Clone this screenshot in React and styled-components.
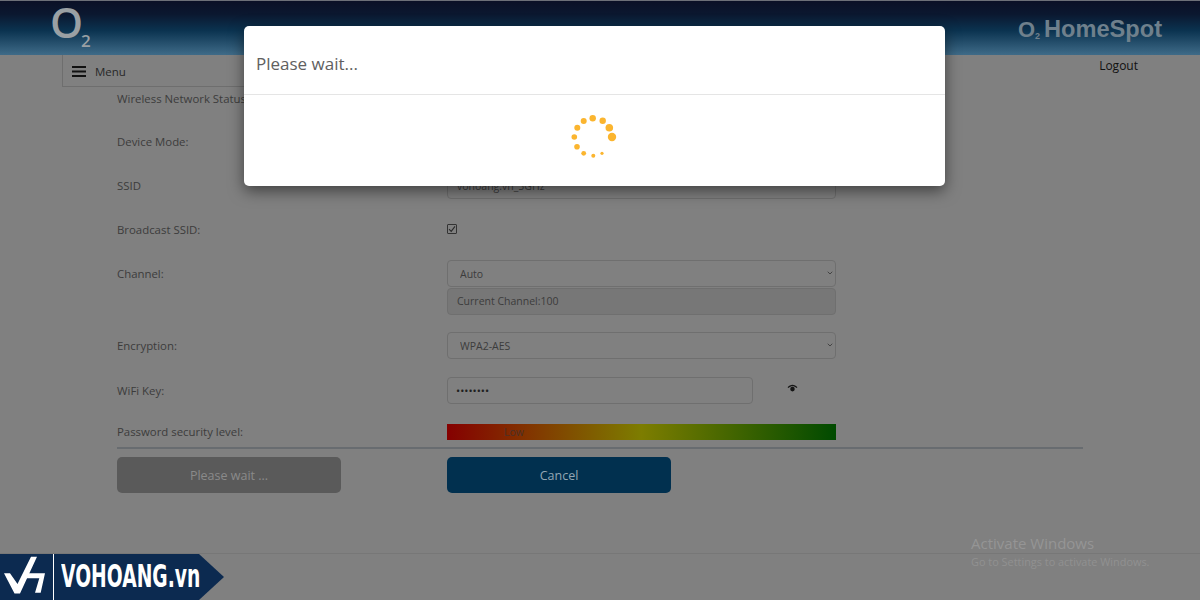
import React from 'react'
import styled, { createGlobalStyle } from 'styled-components'
import { ChevronDown } from 'lucide-react'

const spinnerDots = [
  [592.7, 118.3, 3.2],
  [602.7, 120.7, 3.2],
  [609.3, 127.7, 3.8],
  [612, 137, 4.2],
  [602, 153.3, 1.6],
  [593.3, 155.7, 2],
  [583.7, 153.3, 2.4],
  [577, 146.7, 2.8],
  [574.3, 137, 2.8],
  [577.3, 127.7, 3],
  [583.7, 121, 3],
]

function Dropdown({ value }) {
  return (
    <SelectWrap>
      <Select defaultValue={value}>
        <option>{value}</option>
      </Select>
      <SelectArrow>
        <ChevronDown size={8} strokeWidth={3} />
      </SelectArrow>
    </SelectWrap>
  )
}

function App() {
  return (
    <Page>
      <GlobalStyle />
      <Header>
        <BrandMark>
          O<sub>2</sub>
        </BrandMark>
        <ProductName>
          <small>O</small>
          <sub>2</sub>
          <span>HomeSpot</span>
        </ProductName>
      </Header>
      <NavBar>
        <MenuButton>
          <svg width='14' height='11' viewBox='0 0 14 11'>
            <rect y='0' width='14' height='2' fill='#111' />
            <rect y='4.5' width='14' height='2' fill='#111' />
            <rect y='9' width='14' height='2' fill='#111' />
          </svg>
          Menu
        </MenuButton>
        <LogoutLink>Logout</LogoutLink>
      </NavBar>
      <Form>
        <Row $height={43}>
          <Label>Wireless Network Status</Label>
        </Row>
        <Row $height={44}>
          <Label>Device Mode:</Label>
        </Row>
        <Row $height={44}>
          <Label>SSID</Label>
          <TextInput type='text' defaultValue='vohoang.vn_5GHz' />
        </Row>
        <Row $height={44}>
          <Label>Broadcast SSID:</Label>
          <CheckBox>
            <svg width='8' height='8' viewBox='0 0 8 8'>
              <path d='M1 4.2 3.2 6.4 7 1.4' fill='none' stroke='#2a2a2a' strokeWidth='1.1' />
            </svg>
          </CheckBox>
        </Row>
        <Row $height={72}>
          <Label>Channel:</Label>
          <div>
            <Dropdown value='Auto' />
            <ReadonlyField>Current Channel:100</ReadonlyField>
          </div>
        </Row>
        <Row $height={45}>
          <Label>Encryption:</Label>
          <Dropdown value='WPA2-AES' />
        </Row>
        <Row $height={41}>
          <Label>WiFi Key:</Label>
          <KeyField>
            <PasswordInput type='password' defaultValue='12345678' />
            <svg width='11' height='10' viewBox='0 0 12 10'>
              <path d='M0.6 4.2C3.4 0.4 8.6 0.4 11.4 4.2L10.3 5C8 2.4 4 2.4 1.7 5Z' fill='#151515' />
              <circle cx='6' cy='6.2' r='2.5' fill='#151515' />
            </svg>
          </KeyField>
        </Row>
        <Row $height={29}>
          <Label>Password security level:</Label>
          <StrengthBar>Low</StrengthBar>
        </Row>
        <Divider />
        <Actions>
          <WaitButton type='button'>Please wait ...</WaitButton>
          <CancelButton type='button'>Cancel</CancelButton>
        </Actions>
      </Form>
      <Footer />

      <Modal>
        <ModalHeader>Please wait...</ModalHeader>
        <ModalBody>
          <svg width='50' height='50' viewBox='568 112 50 50'>
            {spinnerDots.map(([x, y, r]) => (
              <circle key={`${x}-${y}`} cx={x} cy={y} r={r} fill='#fbb52f' />
            ))}
          </svg>
        </ModalBody>
      </Modal>

      <Watermark>
        <WatermarkTitle>Activate Windows</WatermarkTitle>
        <WatermarkHint>Go to Settings to activate Windows.</WatermarkHint>
      </Watermark>

      <VendorLogo>
        <VendorMark>
          <svg width='53' height='46' viewBox='0 0 53 46'>
            <path d='M4 19.3H10L17.5 30 31 2.7H37L20 39.5H14.5Z' fill='#fff' />
            <path d='M27.7 19.3H45L40.7 38.7H35L39.3 24.3H25Z' fill='#fff' />
          </svg>
        </VendorMark>
        <VendorName>VOHOANG.vn</VendorName>
      </VendorLogo>
    </Page>
  )
}

export default App

///// Style //////

const GlobalStyle = createGlobalStyle`
  html, body {
    margin: 0;
    background: #808080;
  }
  * {
    box-sizing: border-box;
  }
`

const Page = styled.div`
  position: relative;
  width: 1200px;
  height: 600px;
  overflow: hidden;
  background: #808080;
  font-family: 'Open Sans', 'Noto Sans', sans-serif;
  font-size: 11.4px;
  color: #3c3c3c;
`

const Header = styled.header`
  display: flex;
  align-items: flex-start;
  justify-content: space-between;
  height: 55px;
  padding: 0 38px 0 50px;
  border-top: 1px solid #6d7078;
  background: linear-gradient(180deg, #0b1026 0%, #0b1830 25%, #0b3350 55%, #3f6b88 100%);
`

const BrandMark = styled.div`
  margin-top: 1px;
  font-size: 42px;
  line-height: 40px;
  font-weight: 600;
  color: #9aa0a4;

  sub {
    margin-left: -2px;
    font-size: 17px;
    line-height: 0;
    vertical-align: -9px;
  }
`

const ProductName = styled.div`
  display: flex;
  align-items: baseline;
  margin-top: 13px;
  font-family: 'Liberation Sans', Arial, sans-serif;
  font-size: 23.6px;
  line-height: 30px;
  font-weight: 700;
  color: #6f808c;

  small {
    font-size: 22px;
  }

  sub {
    margin-right: 4px;
    font-size: 9px;
    line-height: 0;
    vertical-align: baseline;
    position: relative;
    top: 2px;
  }
`

const NavBar = styled.nav`
  display: flex;
  justify-content: space-between;
  height: 32px;
  padding: 0 62px;
`

const MenuButton = styled.div`
  display: flex;
  align-items: center;
  gap: 9px;
  width: 200px;
  height: 32px;
  padding: 2px 0 0 9px;
  border-left: 1px solid #6e6e6e;
  border-bottom: 1px solid #6e6e6e;
  color: #282828;
  font-size: 11.5px;
`

const LogoutLink = styled.a`
  margin-top: 2px;
  color: #111;
  font-size: 12px;
  line-height: 18px;
`

const Form = styled.form`
  width: 966px;
  margin: -2px 0 0 117px;
`

const Row = styled.div`
  display: grid;
  grid-template-columns: 330px 389px;
  align-items: start;
  height: ${(props) => props.$height}px;
`

const Label = styled.label`
  line-height: 27px;
  color: #3c3c3c;
  white-space: nowrap;
`

const TextInput = styled.input`
  width: 100%;
  height: 27px;
  padding: 0 9px;
  background: #808080;
  border: 1px solid #6f6f6f;
  border-radius: 4px;
  font: inherit;
  font-size: 10.5px;
  color: #3c3c3c;
`

const PasswordInput = styled(TextInput)`
  width: 306px;
  padding: 0 8px;
  font-size: 11px;
  color: #1f1f1f;
`

const CheckBox = styled.span`
  display: flex;
  align-items: center;
  justify-content: center;
  width: 10px;
  height: 10px;
  margin-top: 8px;
  border: 1px solid #333;
  border-radius: 1px;
`

const SelectWrap = styled.div`
  position: relative;
`

const Select = styled.select`
  display: block;
  width: 100%;
  height: 27px;
  padding: 0 12px;
  appearance: none;
  background: #808080;
  border: 1px solid #6f6f6f;
  border-radius: 4px;
  font: inherit;
  font-size: 10.5px;
  color: #3c3c3c;
`

const SelectArrow = styled.span`
  position: absolute;
  top: 9px;
  right: 2px;
  display: flex;
  color: #444;
`

const ReadonlyField = styled.div`
  height: 27px;
  padding: 0 9px;
  margin-top: 1px;
  background: #777;
  border: 1px solid #6f6f6f;
  border-radius: 4px;
  font-size: 10.5px;
  line-height: 25px;
`

const KeyField = styled.div`
  display: flex;
  align-items: flex-start;
  gap: 34px;

  svg {
    margin-top: 6px;
  }
`

const StrengthBar = styled.div`
  height: 16px;
  margin-top: 6px;
  padding-left: 57px;
  background: linear-gradient(90deg, #850000 0%, #7d7d00 50%, #004a00 100%);
  font-size: 10.5px;
  line-height: 17px;
  color: #4a3028;
`

const Divider = styled.hr`
  height: 2px;
  margin: 0 0 8px;
  border: 0;
  background: #686c70;
`

const Actions = styled.div`
  display: grid;
  grid-template-columns: 224px 224px;
  column-gap: 106px;
`

const WaitButton = styled.button`
  height: 36px;
  border: 0;
  border-radius: 5px;
  background: #5a5a5a;
  color: #8a8a8a;
  font: inherit;
  font-size: 12.5px;
  font-weight: 500;
`

const CancelButton = styled(WaitButton)`
  background: #01304f;
  color: #93a6b3;
`

const Footer = styled.footer`
  height: 47px;
  margin-top: 60px;
  border-top: 1px solid #777;
`

const Modal = styled.div`
  position: absolute;
  top: 26px;
  left: 244px;
  width: 701px;
  height: 160px;
  background: #fff;
  border-radius: 5px;
  box-shadow: 0 5px 15px rgba(0, 0, 0, 0.5);
`

const ModalHeader = styled.div`
  height: 69px;
  padding: 0 12px;
  border-bottom: 1px solid #e5e5e5;
  font-size: 17px;
  line-height: 76px;
  color: #606060;
`

const ModalBody = styled.div`
  display: flex;
  justify-content: center;
  padding: 17px 3px 0 0;
`

const Watermark = styled.div`
  position: absolute;
  top: 533px;
  left: 971px;
  color: #959595;
`

const WatermarkTitle = styled.div`
  font-size: 15px;
  line-height: 20px;
`

const WatermarkHint = styled.div`
  font-size: 10.9px;
  line-height: 18px;
  color: #919191;
`

const VendorLogo = styled.div`
  position: absolute;
  left: 0;
  bottom: 0;
  display: flex;
  width: 224px;
  height: 46px;
  background: #0c2a50;
  clip-path: polygon(0 0, 199px 0, 224px 50%, 199px 100%, 0 100%);
`

const VendorMark = styled.div`
  width: 54px;
  height: 46px;
  border-right: 1px solid #fff;
`

const VendorName = styled.div`
  margin: -1px 0 0 7px;
  font-family: 'DejaVu Sans', sans-serif;
  font-size: 32px;
  line-height: 46px;
  font-weight: 700;
  color: #fff;
  white-space: nowrap;
  transform: scaleX(0.585);
  transform-origin: left center;
`
